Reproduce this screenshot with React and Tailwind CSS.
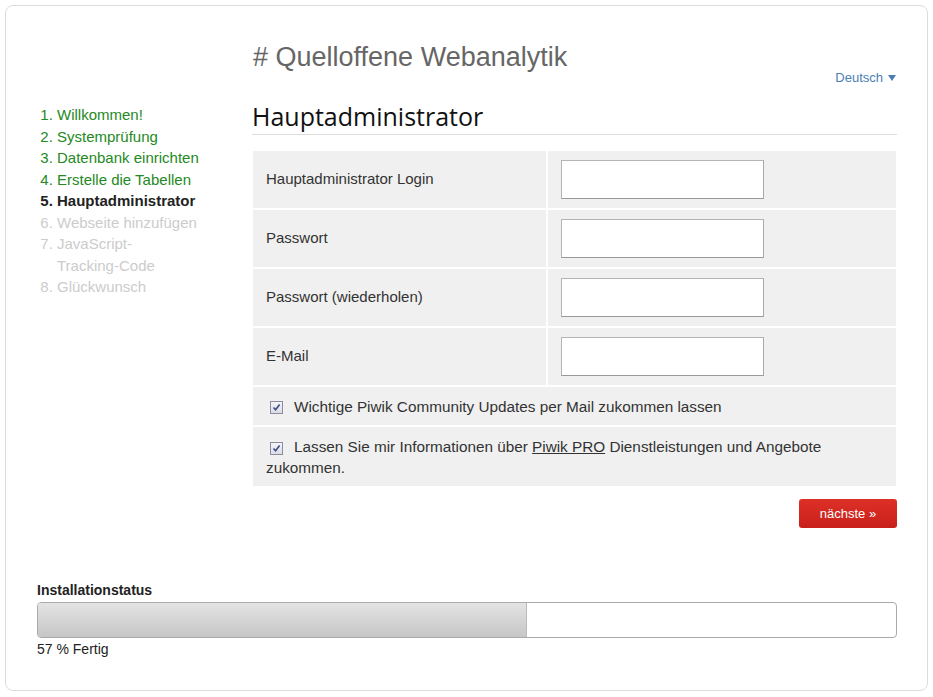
import React from "react";

const steps = [
  { label: "Willkommen!", state: "done" },
  { label: "Systemprüfung", state: "done" },
  { label: "Datenbank einrichten", state: "done" },
  { label: "Erstelle die Tabellen", state: "done" },
  { label: "Hauptadministrator", state: "current" },
  { label: "Webseite hinzufügen", state: "todo" },
  { label: "JavaScript-Tracking-Code", state: "todo" },
  { label: "Glückwunsch", state: "todo" },
];

const fields = [
  "Hauptadministrator Login",
  "Passwort",
  "Passwort (wiederholen)",
  "E-Mail",
];

function Checkbox() {
  return (
    <span className="inline-flex items-center justify-center w-[13px] h-[13px] ml-[4px] mr-[11px] align-[-1px] border border-[#8c8c9c] bg-gradient-to-b from-[#f4f4f8] to-[#dcdce6]">
      <svg width="9" height="9" viewBox="0 0 9 9">
        <path d="M1.5 4.5 L3.6 6.8 L7.6 1.6" fill="none" stroke="#3a4a8a" strokeWidth="1.6" />
      </svg>
    </span>
  );
}

export default function App() {
  return (
    <div className="w-[933px] h-[697px] bg-white pt-[5px] px-[5px] font-['Liberation_Sans',Arial,sans-serif]">
      <div className="h-[686px] w-[923px] border border-[#dcdcdc] rounded-lg pl-[31px] pr-[30px] pt-[37px] flex flex-col">
        <div className="flex">
          {/* Steps */}
          <aside className="w-[215px] pt-[61px]">
            <ol className="list-decimal pl-[20px] w-[180px] text-[15px] leading-[21.5px]">
              {steps.map((s) => (
                <li
                  key={s.label}
                  className={
                    s.state === "done"
                      ? "text-[#238a23]"
                      : s.state === "current"
                      ? "text-[#222] font-bold"
                      : "text-[#cccccc]"
                  }
                >
                  {s.label === "JavaScript-Tracking-Code" ? (
                    <>
                      JavaScript-
                      <br />
                      Tracking-Code
                    </>
                  ) : (
                    s.label
                  )}
                </li>
              ))}
            </ol>
          </aside>

          {/* Main */}
          <div className="flex-1">
            <h1 className="text-[27px] leading-[28px] text-[#666] ml-[1px]">
              # Quelloffene Webanalytik
            </h1>
            <div className="flex justify-end">
              <button className="text-[13px] leading-[13px] text-[#4a7eb5] mr-[1px] flex items-center gap-[5px]">
                Deutsch
                <svg width="8" height="6" viewBox="0 0 8 6">
                  <path d="M0 0 H8 L4 6 Z" fill="#4a7eb5" />
                </svg>
              </button>
            </div>
            <h2 className="mt-[17px] pb-[3px] border-b border-[#dcdcdc] text-[25px] leading-[30px] text-[#111] font-['Open_Sans',sans-serif]">
              Hauptadministrator
            </h2>

            <div className="mt-[16px] ml-[1px] mr-[1px] flex flex-col gap-[2px] text-[15px] text-[#333]">
              {fields.map((f) => (
                <div key={f} className="grid grid-cols-[293px_1fr] gap-[2px] h-[57px]">
                  <div className="bg-[#f0f0f0] flex items-center pl-[13px]">{f}</div>
                  <div className="bg-[#f0f0f0] flex items-center pl-[13px]">
                    <input
                      type={f.startsWith("Passwort") ? "password" : "text"}
                      className="w-[203px] h-[39px] bg-white border border-[#b4b4b4] border-b-[#999] border-r-[#aaa] outline-none"
                    />
                  </div>
                </div>
              ))}
              <div className="bg-[#f0f0f0] h-[38px] flex items-center pl-[13px] pt-[2px] text-[15.3px]">
                <Checkbox />
                <span>Wichtige Piwik Community Updates per Mail zukommen lassen</span>
              </div>
              <div className="bg-[#f0f0f0] h-[59px] pl-[13px] pr-[40px] pt-[9px] leading-[21px] text-[15.3px]">
                <Checkbox />
                Lassen Sie mir Informationen über <span className="underline">Piwik PRO</span>{" "}
                Dienstleistungen und Angebote zukommen.
              </div>
            </div>

            <div className="flex justify-end mt-[13px]">
              <button className="w-[98px] h-[29px] rounded-[3px] bg-gradient-to-b from-[#dd3027] to-[#c8201a] text-white text-[13px]">
                nächste »
              </button>
            </div>
          </div>
        </div>

        {/* Install status */}
        <div className="mt-[54px]">
          <div className="text-[14px] leading-[17px] font-bold text-[#222]">Installationstatus</div>
          <div className="mt-[3px] h-[36px] border border-[#aaa] rounded-[4px] overflow-hidden bg-white flex">
            <div className="w-[57%] h-full bg-gradient-to-b from-[#e4e4e4] to-[#c6c6c6] border-r border-[#bbb]" />
          </div>
          <div className="mt-[3px] text-[14px] leading-[17px] text-[#222]">57 % Fertig</div>
        </div>
      </div>
    </div>
  );
}
